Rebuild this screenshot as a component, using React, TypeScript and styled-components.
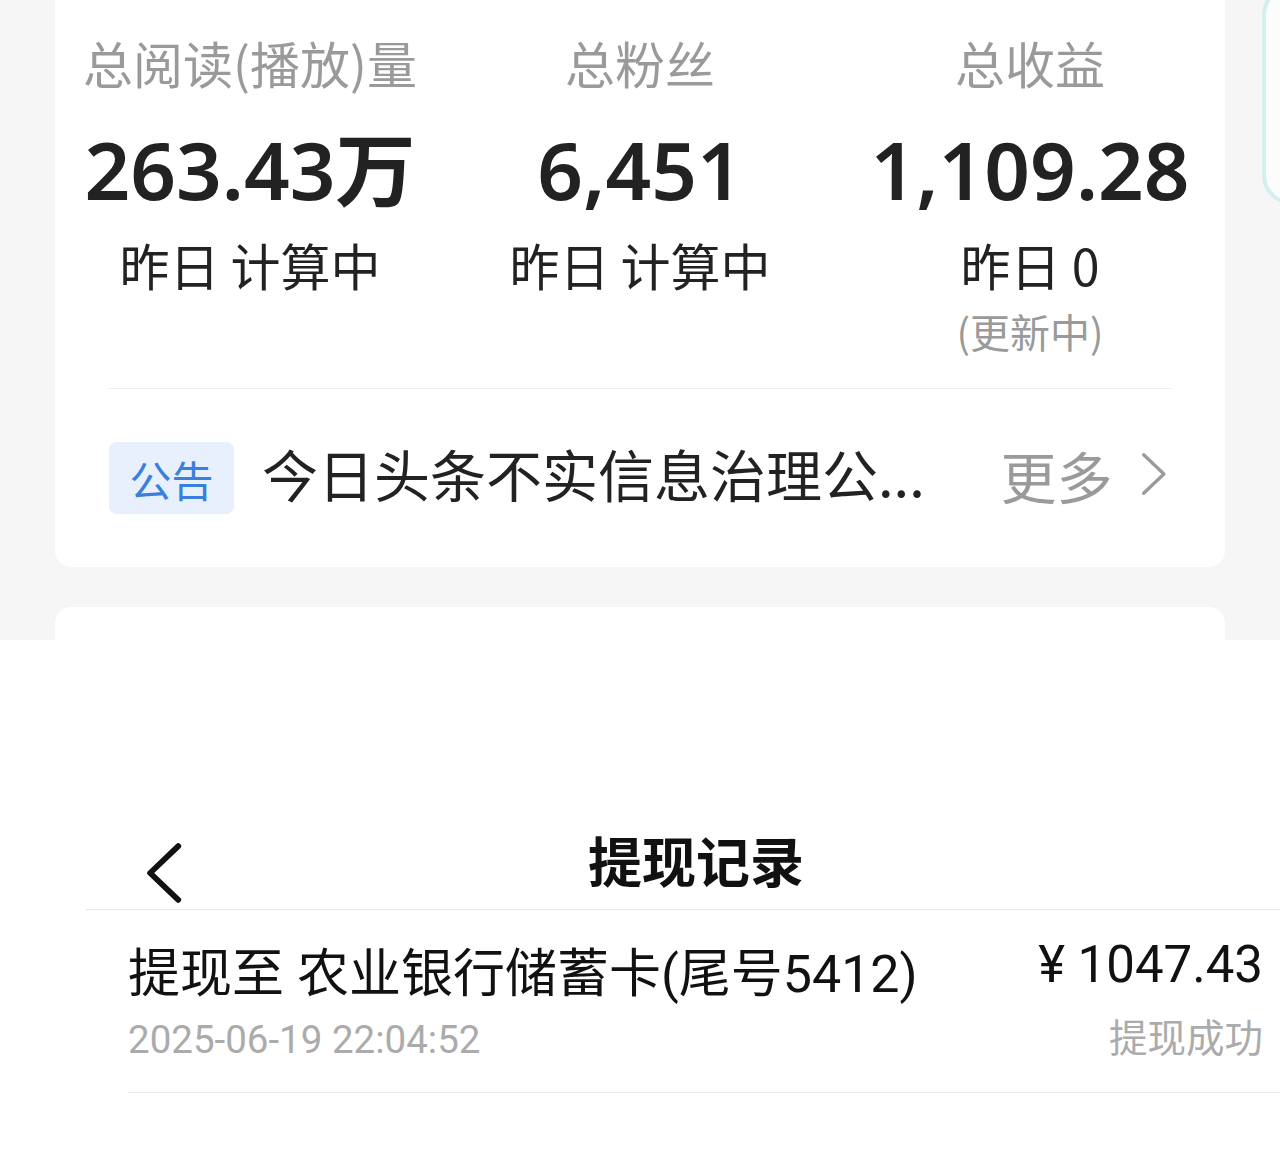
import React from "react";
import styled, { createGlobalStyle } from "styled-components";

const GlobalStyle = createGlobalStyle`
  html, body {
    margin: 0;
    padding: 0;
    background: #ffffff;
  }
  body {
    font-family: "Noto Sans", "Noto Sans CJK SC", sans-serif;
    color: #222222;
  }
`;

const CJK = `"Noto Sans CJK SC", "Noto Sans", sans-serif`;
const NUM = `"Noto Sans", "Noto Sans CJK SC", sans-serif`;
const ROBOTO = `Roboto, "Noto Sans CJK SC", sans-serif`;

const Page = styled.div`
  width: 1280px;
  height: 1152px;
  overflow: hidden;
  display: flex;
  flex-direction: column;
`;

/* ---------- upper screenshot: creator stats ---------- */

const TopSection = styled.section`
  height: 640px;
  flex-shrink: 0;
  background: #f6f6f6;
  display: flex;
  gap: 37px;
  padding-left: 55px;
  overflow: hidden;
`;

const CardColumn = styled.div`
  width: 1170px;
  flex-shrink: 0;
  display: flex;
  flex-direction: column;
  gap: 40px;
`;

const StatsCard = styled.div`
  height: 567px;
  background: #ffffff;
  border-radius: 0 0 16px 16px;
  display: flex;
  flex-direction: column;
`;

const NextCard = styled.div`
  flex: 1;
  background: #ffffff;
  border-radius: 16px 16px 0 0;
`;

const PeekCard = styled.div`
  width: 240px;
  height: 220px;
  flex-shrink: 0;
  margin-top: -15px;
  box-sizing: border-box;
  border: 4px solid #d4efee;
  border-radius: 30px;
  background: #fbfdfd;
`;

const StatsGrid = styled.div`
  display: grid;
  grid-template-columns: repeat(3, 1fr);
  padding: 32px 0 32px;
`;

const Stat = styled.div`
  display: flex;
  flex-direction: column;
  align-items: center;
`;

const StatLabel = styled.div`
  font-family: ${CJK};
  font-size: 50px;
  line-height: 60px;
  color: #9a9a9a;
  white-space: nowrap;
`;

const StatValue = styled.div`
  margin-top: 29px;
  font-family: ${NUM};
  font-weight: 600;
  font-size: 80px;
  line-height: 96px;
  color: #222222;
  white-space: nowrap;
`;

const StatSub = styled.div`
  margin-top: 17px;
  font-family: ${CJK};
  font-size: 50px;
  line-height: 60px;
  color: #222222;
  white-space: pre;
`;

const StatNote = styled.div`
  margin-top: 12px;
  font-family: ${CJK};
  font-size: 40px;
  line-height: 50px;
  color: #9a9a9a;
`;

const Divider = styled.div`
  height: 1px;
  margin: 0 53px;
  background: #efefef;
`;

const NoticeRow = styled.div`
  flex: 1;
  display: flex;
  align-items: center;
  padding: 0 57px 0 54px;
`;

const Tag = styled.span`
  flex-shrink: 0;
  width: 125px;
  height: 72px;
  border-radius: 8px;
  background: #e7f0fc;
  color: #3a7fdb;
  font-family: ${CJK};
  font-size: 42px;
  display: flex;
  align-items: center;
  justify-content: center;
`;

const NoticeText = styled.span`
  flex: 1;
  margin-left: 28px;
  padding-bottom: 12px;
  font-family: ${CJK};
  font-size: 56px;
  color: #222222;
  white-space: nowrap;
  overflow: hidden;
`;

const More = styled.span`
  display: flex;
  align-items: center;
  gap: 28px;
  padding-bottom: 8px;
  font-family: ${CJK};
  font-size: 56px;
  color: #9a9a9a;
`;

/* ---------- lower screenshot: withdrawal record ---------- */

const BottomSection = styled.section`
  flex: 1;
  background: #ffffff;
  padding: 180px 0 0 86px;
`;

const Panel = styled.div`
  width: 1220px;
`;

const Header = styled.header`
  height: 89px;
  display: grid;
  grid-template-columns: 1fr auto 1fr;
  align-items: center;
  border-bottom: 1px solid #e6e6e6;
`;

const BackButton = styled.span`
  padding-left: 59px;
  margin-top: 14px;
  display: flex;
`;

const Title = styled.h1`
  margin: 0 0 12px;
  font-family: ${CJK};
  font-weight: 700;
  font-size: 54px;
  color: #111111;
`;

const RecordRow = styled.div`
  margin-left: 42px;
  padding: 24px 43px 29px 0;
  display: flex;
  justify-content: space-between;
  align-items: flex-start;
  border-bottom: 1px solid #ececec;
`;

const RecordLeft = styled.div`
  margin-top: 10px;
  display: flex;
  flex-direction: column;
  gap: 11px;
`;

const RecordRight = styled.div`
  display: flex;
  flex-direction: column;
  align-items: flex-end;
  gap: 20px;
`;

const RecordTitle = styled.div`
  font-family: ${ROBOTO};
  font-size: 52px;
  line-height: 62px;
  color: #111111;
  white-space: pre;
`;

const Amount = styled.div`
  font-family: ${ROBOTO};
  font-size: 51px;
  line-height: 62px;
  color: #111111;
  white-space: pre;
`;

const Meta = styled.div`
  font-family: ${ROBOTO};
  font-size: 38.5px;
  line-height: 46px;
  color: #ababab;
`;

const Chevron = ({ dir, color, size }: { dir: "left" | "right"; color: string; size: number }) => (
  <svg width={size * 0.6} height={size} viewBox="0 0 30 50" fill="none">
    <polyline
      points={dir === "left" ? "26,4 4,25 26,46" : "4,4 26,25 4,46"}
      stroke={color}
      strokeWidth={dir === "left" ? 4.5 : 3.6}
      strokeLinecap="round"
      strokeLinejoin="round"
    />
  </svg>
);

const stats = [
  { label: "总阅读(播放)量", value: "263.43万", sub: "昨日 计算中" },
  { label: "总粉丝", value: "6,451", sub: "昨日 计算中" },
  { label: "总收益", value: "1,109.28", sub: "昨日 0", note: "(更新中)" },
];

export default function App() {
  return (
    <Page>
      <GlobalStyle />
      <TopSection>
        <CardColumn>
          <StatsCard>
            <StatsGrid>
              {stats.map((s) => (
                <Stat key={s.label}>
                  <StatLabel>{s.label}</StatLabel>
                  <StatValue>{s.value}</StatValue>
                  <StatSub>{s.sub}</StatSub>
                  {s.note && <StatNote>{s.note}</StatNote>}
                </Stat>
              ))}
            </StatsGrid>
            <Divider />
            <NoticeRow>
              <Tag>公告</Tag>
              <NoticeText>今日头条不实信息治理公...</NoticeText>
              <More>
                更多
                <Chevron dir="right" color="#9a9a9a" size={46} />
              </More>
            </NoticeRow>
          </StatsCard>
          <NextCard />
        </CardColumn>
        <PeekCard />
      </TopSection>

      <BottomSection>
        <Panel>
          <Header>
            <BackButton>
              <Chevron dir="left" color="#111111" size={64} />
            </BackButton>
            <Title>提现记录</Title>
            <span />
          </Header>
          <RecordRow>
            <RecordLeft>
              <RecordTitle>提现至 农业银行储蓄卡(尾号5412)</RecordTitle>
              <Meta>2025-06-19 22:04:52</Meta>
            </RecordLeft>
            <RecordRight>
              <Amount>¥ 1047.43</Amount>
              <Meta>提现成功</Meta>
            </RecordRight>
          </RecordRow>
        </Panel>
      </BottomSection>
    </Page>
  );
}
